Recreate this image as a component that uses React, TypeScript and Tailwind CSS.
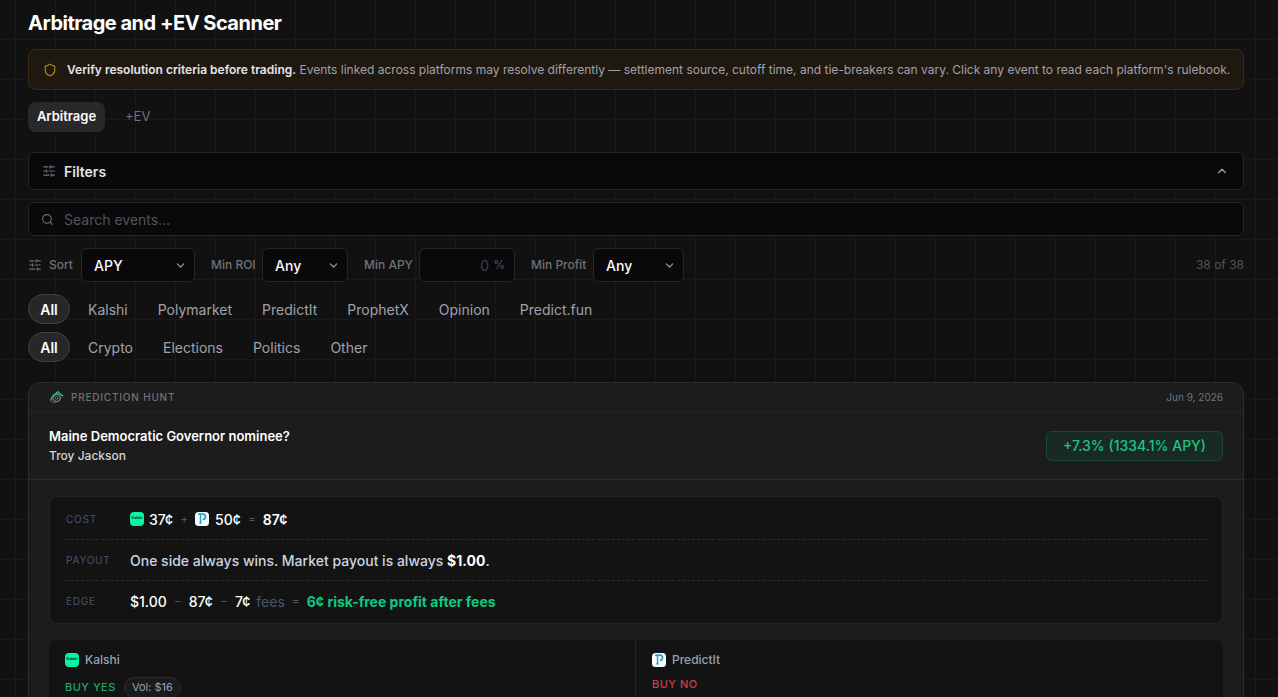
import React from "react";
import { ChevronDown, ChevronUp, Search, Shield, SlidersHorizontal } from "lucide-react";

const platforms = ["Kalshi", "Polymarket", "PredictIt", "ProphetX", "Opinion", "Predict.fun"];
const categories = ["Crypto", "Elections", "Politics", "Other"];

function KalshiLogo() {
  return (
    <span className="inline-flex size-[14px] shrink-0 items-center justify-center rounded-[4px] bg-[#09f5a6] font-['Inter',sans-serif] text-[3.5px] leading-none font-extrabold text-[#04402c]">
      Kalshi
    </span>
  );
}

function PredictItLogo() {
  return (
    <svg className="size-[14px] shrink-0" viewBox="0 0 14 14" fill="none">
      <rect width="14" height="14" rx="3.5" fill="#f8fcfd" />
      <path d="M3.2 2.2h4.6c3.6 0 3.6 5.2 0 5.2" stroke="#22a9c9" strokeWidth="1.7" />
      <path d="M5.5 2v9" stroke="#22a9c9" strokeWidth="1.5" />
      <path d="M4 10.2h3L5.5 12.6z" fill="#22a9c9" />
    </svg>
  );
}

function HuntLogo() {
  return (
    <svg className="h-[14px] w-[16px] shrink-0" viewBox="0 0 16 14" fill="none">
      <circle cx="7.6" cy="7.8" r="3.7" stroke="#8b8f9b" strokeWidth="1.1" />
      <circle cx="7.6" cy="7.8" r="1.5" stroke="#6d7585" strokeWidth="1" />
      <path d="M1.6 10.8C2.5 7 5 4.6 8.2 4.2" stroke="#35a58c" strokeWidth="1.3" />
      <path d="M3.5 6.6 8.8 1.8l1.9 1.7 3.5 2.6" stroke="#35b394" strokeWidth="1.4" />
      <path d="M2 11.6c3.6 1.8 8 .8 10-4.4" stroke="#5f6878" strokeWidth=".9" />
    </svg>
  );
}

function Select({ value, className }: { value: string; className: string }) {
  return (
    <button
      className={`flex h-[34px] items-center justify-between rounded-md border border-[#27272a] bg-[#09090b] pr-[7px] pl-3 text-[14px] font-medium text-[#fafafa] ${className}`}
    >
      {value}
      <ChevronDown size={13} className="text-[#a1a1aa]" />
    </button>
  );
}

function Pills({ items }: { items: string[] }) {
  return (
    <div className="flex h-[30px] items-center gap-1.5">
      <button className="h-[30px] w-[42px] rounded-full border border-[#414144] bg-[#27272a] text-[14px] font-semibold text-white">
        All
      </button>
      {items.map((item) => (
        <button key={item} className="h-[30px] px-3 text-[14px] text-[#a1a1aa]">
          {item}
        </button>
      ))}
    </div>
  );
}

function CalcRow({ label, children }: { label: string; children: React.ReactNode }) {
  return (
    <div className="flex h-[41px] items-center border-t border-dashed border-[#262c38] first:h-[40px] first:border-t-0">
      <span className="w-16 text-[10px] tracking-[0.8px] text-[#475569]">{label}</span>
      <div className="flex items-center text-[14px] font-medium whitespace-pre text-white">{children}</div>
    </div>
  );
}

function Op({ children }: { children: React.ReactNode }) {
  return <span className="font-normal text-[#475569]">{children}</span>;
}

export default function App() {
  return (
    <div className="h-[697px] overflow-hidden bg-[#111111] bg-[linear-gradient(to_right,#191919_1px,transparent_1px),linear-gradient(to_bottom,#191919_1px,transparent_1px)] bg-size-[40px_40px] bg-position-[15px_39px] pr-[34px] pl-7 font-['Inter',sans-serif]">
      <h1 className="flex h-[49px] items-center pb-[3px] text-[20px] font-bold tracking-[-0.5px] text-white">
        Arbitrage and +EV Scanner
      </h1>

      <div className="flex h-[41px] items-center rounded-lg border border-[#3c2d11] bg-[#1f1810] pl-[14px] text-[12px] text-[#a1a1aa]">
        <Shield size={14} className="mr-[10px] text-[#b78911]" />
        <p>
          <strong className="font-semibold text-[#e4e4e7]">Verify resolution criteria before trading.</strong> Events linked across
          platforms may resolve differently — settlement source, cutoff time, and tie-breakers can vary. Click any event to read each
          platform's rulebook.
        </p>
      </div>

      <nav className="mt-3 flex h-[30px] gap-2 text-[13px]">
        <button className="w-[77px] rounded-lg bg-[#292929] font-semibold text-white">Arbitrage</button>
        <button className="px-3 text-[#71717a]">+EV</button>
      </nav>

      <button className="mt-5 flex h-[38px] w-full items-center rounded-md border border-[#27272a] bg-[#09090b] pr-[14px] pl-[13px]">
        <SlidersHorizontal size={14} className="mr-2 text-[#71717a]" />
        <span className="text-[14px] font-semibold text-[#e4e4e7]">Filters</span>
        <ChevronUp size={14} className="ml-auto text-[#a1a1aa]" />
      </button>

      <div className="mt-3 flex h-[34px] items-center rounded-md border border-[#27272a] bg-[#09090b] pl-3">
        <Search size={13} className="mr-[10px] text-[#71717a]" />
        <span className="text-[14px] text-[#52525b]">Search events...</span>
      </div>

      <div className="mt-3 flex h-[34px] items-center text-[12px] font-medium text-[#71717a]">
        <SlidersHorizontal size={14} className="mr-[7px]" />
        <span className="w-[32px]">Sort</span>
        <Select value="APY" className="w-[114px]" />
        <span className="ml-4 w-[51px] whitespace-nowrap">Min ROI</span>
        <Select value="Any" className="w-[86px]" />
        <span className="ml-4 w-[55px] whitespace-nowrap">Min APY</span>
        <div className="flex h-[34px] w-[96px] items-center justify-end gap-1 rounded-md border border-[#27272a] bg-[#09090b] pr-[9px] font-normal text-[#52525b]">
          <span className="text-[14px] text-[#3f3f46]">0</span>
          <span>%</span>
        </div>
        <span className="ml-4 w-[62px] whitespace-nowrap">Min Profit</span>
        <Select value="Any" className="w-[91px]" />
        <span className="ml-auto font-normal text-[#52525b]">38 of 38</span>
      </div>

      <div className="mt-3 flex flex-col gap-2">
        <Pills items={platforms} />
        <Pills items={categories} />
      </div>

      <article className="mt-5 h-[400px] rounded-t-xl border border-[#2c2c2c] bg-[#1c1c1c]">
        <header className="flex h-[29px] items-center border-b border-[#252525] px-5 text-[10px] text-[#71717a]">
          <HuntLogo />
          <span className="ml-[6px] font-medium tracking-[0.8px]">PREDICTION HUNT</span>
          <span className="ml-auto">Jun 9, 2026</span>
        </header>

        <div className="flex h-[68px] items-center justify-between border-b border-[#2c2c2c] px-5">
          <div>
            <h2 className="h-5 text-[13px] leading-5 font-semibold text-white">Maine Democratic Governor nominee?</h2>
            <p className="text-[12px] leading-5 font-medium text-[#d4d4d8]">Troy Jackson</p>
          </div>
          <span className="flex h-[30px] w-[177px] items-center justify-center rounded-md border border-[#174834] bg-[#182a23] text-[14px] font-medium text-[#1cc584]">
            +7.3% (1334.1% APY)
          </span>
        </div>

        <div className="px-5 pt-4">
          <section className="h-[128px] rounded-lg border border-[#1e2430] bg-[#131313] px-4 py-[2px]">
            <CalcRow label="COST">
              <KalshiLogo />
              <span className="ml-[5px]">37¢</span>
              <span className="mx-[7px] text-[12px]"><Op>+</Op></span>
              <PredictItLogo />
              <span className="ml-[6px]">50¢</span>
              <span className="mx-[7px] text-[12px]"><Op>=</Op></span>
              <span className="font-semibold">87¢</span>
            </CalcRow>
            <CalcRow label="PAYOUT">
              <span className="text-[#cbd5e1]">One side always wins. Market payout is always </span>
              <span className="font-bold">$1.00</span>
              <span className="text-[#cbd5e1]">.</span>
            </CalcRow>
            <CalcRow label="EDGE">
              <span>$1.00</span>
              <span className="mx-[7px] text-[12px]"><Op>−</Op></span>
              <span>87¢</span>
              <span className="mx-[7px] text-[12px]"><Op>−</Op></span>
              <span>7¢</span>
              <span className="ml-[6px]"><Op>fees</Op></span>
              <span className="mx-[7px] text-[12px]"><Op>=</Op></span>
              <span className="font-bold text-[#10c981]">6¢ risk-free profit after fees</span>
            </CalcRow>
          </section>

          <section className="mt-4 grid h-[120px] grid-cols-2 rounded-lg bg-[#131313] text-[12px]">
            <div className="border-r border-[#1b2632] px-4 pt-[13px]">
              <div className="flex h-[14px] items-center gap-[6px] font-medium text-[#94a3b8]">
                <KalshiLogo />
                Kalshi
              </div>
              <div className="mt-[10px] flex h-[21px] items-center gap-2">
                <span className="text-[11px] font-medium tracking-[0.5px] text-[#1fa867]">BUY YES</span>
                <span className="flex h-[21px] w-[57px] items-center justify-center rounded-full border border-[#2c2c2e] bg-[#1b1b1c] text-[11px] text-[#94a3b8]">
                  Vol: $16
                </span>
              </div>
            </div>
            <div className="px-4 pt-[13px]">
              <div className="flex h-[14px] items-center gap-[6px] font-medium text-[#94a3b8]">
                <PredictItLogo />
                PredictIt
              </div>
              <div className="mt-[10px] flex h-[15px] items-center text-[11px] font-medium tracking-[0.5px] text-[#c93f50]">BUY NO</div>
            </div>
          </section>
        </div>
      </article>
    </div>
  );
}
